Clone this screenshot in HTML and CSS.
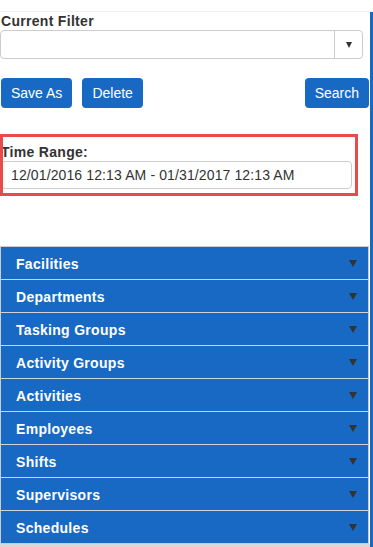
FILE: index.html
```html
<!DOCTYPE html>
<html>
<head>
<meta charset="utf-8">
<link rel="stylesheet" href="styles.css">
</head>
<body>
<div class="top"></div>
<div class="panel">
  <div class="label">Current Filter</div>
  <div class="select">
    <div class="select-value"></div>
    <div class="select-caret"><span class="tri tri-sm"></span></div>
  </div>
  <div class="actions">
    <button class="btn">Save As</button>
    <button class="btn">Delete</button>
    <button class="btn btn-right">Search</button>
  </div>
  <div class="time">
    <div class="label">Time Range:</div>
    <div class="input">12/01/2016 12:13 AM - 01/31/2017 12:13 AM</div>
  </div>
  <div class="accordion">
    <div class="row"><span>Facilities</span><span class="tri"></span></div>
    <div class="row"><span>Departments</span><span class="tri"></span></div>
    <div class="row"><span>Tasking Groups</span><span class="tri"></span></div>
    <div class="row"><span>Activity Groups</span><span class="tri"></span></div>
    <div class="row"><span>Activities</span><span class="tri"></span></div>
    <div class="row"><span>Employees</span><span class="tri"></span></div>
    <div class="row"><span>Shifts</span><span class="tri"></span></div>
    <div class="row"><span>Supervisors</span><span class="tri"></span></div>
    <div class="row"><span>Schedules</span><span class="tri"></span></div>
  </div>
  <div class="foot"></div>
</div>
</body>
</html>
```
FILE: styles.css
```css
html, body {
  margin: 0;
  padding: 0;
  background: #fff;
  font-family: "Liberation Sans", Arial, sans-serif;
  font-size: 14px;
  color: #333;
  overflow: hidden;
}
.top {
  height: 11px;
  border-bottom: 1px solid #f0f0f0;
}
.panel {
  width: 370px;
  border-right: 3px solid #1769c4;
}
.label {
  font-weight: bold;
  line-height: 18px;
  padding-left: 1px;
  letter-spacing: 0.3px;
  color: #333;
}
.select {
  display: flex;
  box-sizing: border-box;
  width: 363px;
  height: 29px;
  border: 1px solid #ccc;
  border-radius: 4px;
}
.select-value {
  flex: 1;
}
.select-caret {
  width: 27px;
  border-left: 1px solid #ccc;
  display: flex;
  align-items: center;
  justify-content: center;
}
.tri {
  display: inline-block;
  width: 0;
  height: 0;
  border-left: 4px solid transparent;
  border-right: 4px solid transparent;
  border-top: 7px solid #333;
}
.tri-sm {
  border-left-width: 3.5px;
  border-right-width: 3.5px;
  border-top-width: 6px;
  margin-left: 1px;
}
.actions {
  display: flex;
  gap: 10px;
  margin-top: 19px;
  padding-left: 1px;
  padding-right: 1px;
}
.btn {
  height: 30px;
  padding: 0 10px;
  border: none;
  border-radius: 4px;
  background: #1769c4;
  color: #fff;
  font-family: "Liberation Sans", Arial, sans-serif;
  font-size: 14px;
  line-height: 30px;
}
.btn-right {
  margin-left: auto;
}
.time {
  position: relative;
  margin-top: 35px;
}
.time::after {
  content: "";
  position: absolute;
  left: 0;
  top: -9px;
  bottom: -7px;
  width: 358px;
  box-sizing: border-box;
  border: 3px solid #e94b4b;
  pointer-events: none;
}
.input {
  box-sizing: border-box;
  margin-left: 1px;
  width: 351px;
  height: 28px;
  border: 1px solid #ccc;
  border-radius: 4px;
  padding-left: 9px;
  line-height: 26px;
  letter-spacing: 0.12px;
  color: #333;
}
.accordion {
  margin-top: 57px;
  box-sizing: border-box;
  width: 369px;
  border: 1px solid #ccc;
}
.row {
  display: flex;
  align-items: center;
  justify-content: space-between;
  height: 32px;
  padding: 1px 11px 0 15px;
  box-sizing: border-box;
  background: #1769c4;
  color: #fff;
  font-weight: bold;
  letter-spacing: 0.3px;
}
.row + .row {
  height: 33px;
  border-top: 1px solid #d0d4da;
}
.foot {
  height: 10px;
  background: #d8d8d8;
}
```
